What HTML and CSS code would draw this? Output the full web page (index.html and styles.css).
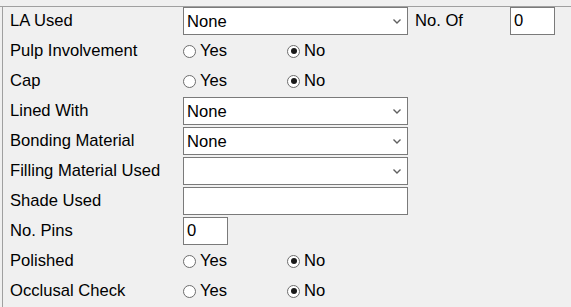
FILE: index.html
```html
<!DOCTYPE html>
<html lang="en">

<head>
  <meta charset="UTF-8">
  <meta name="viewport" content="width=device-width, initial-scale=1.0">
  <title>Restoration Details</title>

  <link rel="stylesheet" href="styles.css">
</head>

<body>
  <main class="panel">
    <form class="details">
      <div class="row">
        <label class="caption">LA Used</label>
        <div class="combo"><span>None</span><svg class="chevron" width="8" height="5" viewBox="0 0 8 5"><path d="M0.5 0.5 L4 4 L7.5 0.5" fill="none" stroke="#606060" stroke-width="1.4" /></svg></div>
        <label class="caption caption-side">No. Of</label>
        <div class="box box-small">0</div>
      </div>

      <div class="row">
        <label class="caption">Pulp Involvement</label>
        <div class="choice"><span class="dot"></span>Yes</div>
        <div class="choice"><span class="dot checked"></span>No</div>
      </div>

      <div class="row">
        <label class="caption">Cap</label>
        <div class="choice"><span class="dot"></span>Yes</div>
        <div class="choice"><span class="dot checked"></span>No</div>
      </div>

      <div class="row">
        <label class="caption">Lined With</label>
        <div class="combo"><span>None</span><svg class="chevron" width="8" height="5" viewBox="0 0 8 5"><path d="M0.5 0.5 L4 4 L7.5 0.5" fill="none" stroke="#606060" stroke-width="1.4" /></svg></div>
      </div>

      <div class="row">
        <label class="caption">Bonding Material</label>
        <div class="combo"><span>None</span><svg class="chevron" width="8" height="5" viewBox="0 0 8 5"><path d="M0.5 0.5 L4 4 L7.5 0.5" fill="none" stroke="#606060" stroke-width="1.4" /></svg></div>
      </div>

      <div class="row">
        <label class="caption">Filling Material Used</label>
        <div class="combo"><span></span><svg class="chevron" width="8" height="5" viewBox="0 0 8 5"><path d="M0.5 0.5 L4 4 L7.5 0.5" fill="none" stroke="#606060" stroke-width="1.4" /></svg></div>
      </div>

      <div class="row">
        <label class="caption">Shade Used</label>
        <div class="box box-wide"></div>
      </div>

      <div class="row">
        <label class="caption">No. Pins</label>
        <div class="box box-small">0</div>
      </div>

      <div class="row">
        <label class="caption">Polished</label>
        <div class="choice"><span class="dot"></span>Yes</div>
        <div class="choice"><span class="dot checked"></span>No</div>
      </div>

      <div class="row">
        <label class="caption">Occlusal Check</label>
        <div class="choice"><span class="dot"></span>Yes</div>
        <div class="choice"><span class="dot checked"></span>No</div>
      </div>
    </form>
  </main>
</body>

</html>
```

FILE: styles.css
```css
body {
  background: #f0f0f0;
  color: #000;
  font-family: "Liberation Sans", Arial, sans-serif;
  font-size: 16.6px;
  margin: 0;
  overflow: hidden;
}

.panel {
  border-top: 1px solid #a0a0a0;
  margin-top: 6px;
}

.details {
  border-left: 1px solid #a0a0a0;
  height: 300px;
  margin-left: 2px;
  padding-left: 7px;
}

.row {
  align-items: flex-start;
  display: flex;
  height: 30px;
}

.caption {
  height: 28px;
  line-height: 27px;
  white-space: nowrap;
  width: 173px;
}

.caption-side {
  margin-left: 7px;
  width: 95px;
}

.combo,
.box {
  background: #fff;
  border: 1px solid #7a7a7a;
  box-sizing: border-box;
  height: 28px;
  line-height: 25px;
  padding-left: 3px;
}

.combo {
  align-items: center;
  display: flex;
  justify-content: space-between;
  padding-right: 6px;
  width: 225px;
}

.chevron {
  margin-top: 1px;
}

.box-small {
  width: 45px;
}

.box-wide {
  width: 225px;
}

.choice {
  align-items: center;
  display: flex;
  height: 28px;
  width: 104px;
}

.dot {
  background: #fff;
  border: 1px solid #6d6d6d;
  border-radius: 50%;
  box-sizing: border-box;
  height: 13px;
  margin-right: 4px;
  position: relative;
  width: 13px;
}

.dot.checked::after {
  background: #1a1a1a;
  border-radius: 50%;
  content: "";
  height: 6px;
  left: 2.5px;
  position: absolute;
  top: 2.5px;
  width: 6px;
}
```
